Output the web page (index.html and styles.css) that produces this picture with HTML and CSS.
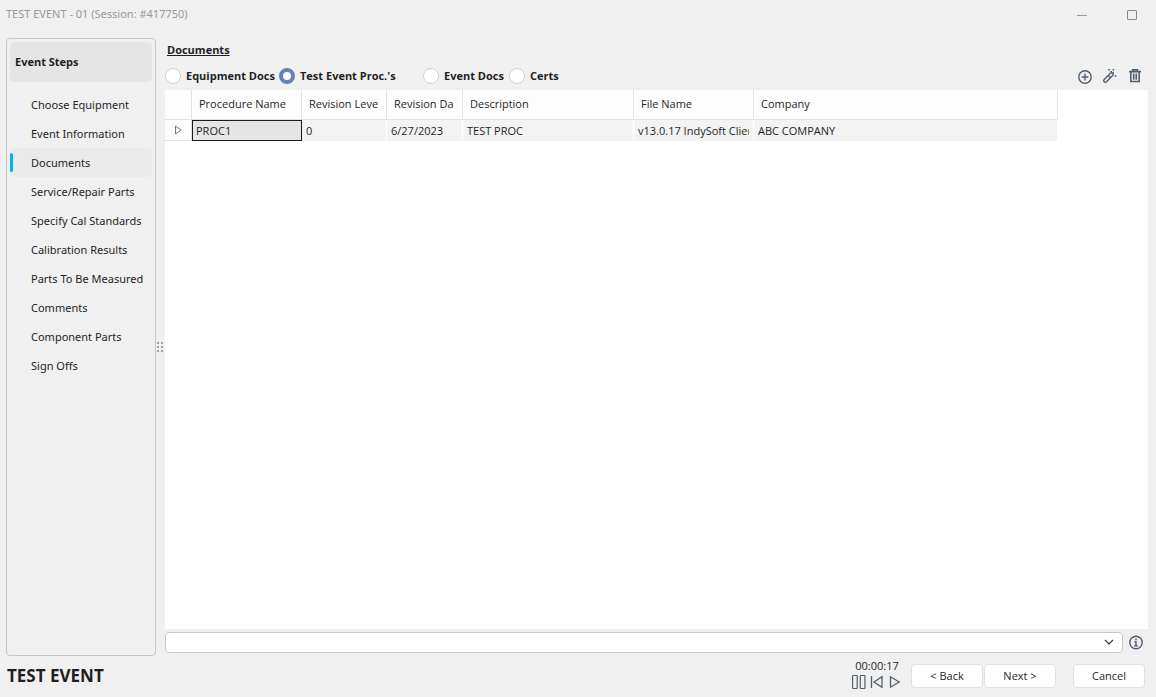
FILE: index.html
```html
<!DOCTYPE html>
<html lang="en">
<head>
<meta charset="utf-8">
<title>TEST EVENT - 01</title>
<link rel="stylesheet" href="styles.css">
</head>
<body>
<div class="window">
  <header class="titlebar">
    <span class="title">TEST EVENT - 01 (Session: #417750)</span>
    <div class="window-controls">
      <button class="icon-button" type="button" aria-label="Minimize"><svg width="12" height="12" viewBox="0 0 12 12"><path d="M1 7.5h10" stroke="#999" fill="none"/></svg></button>
      <button class="icon-button" type="button" aria-label="Maximize"><svg width="12" height="12" viewBox="0 0 12 12"><rect x="1.5" y="2.5" width="9" height="9" rx="0.5" stroke="#8a8a8a" fill="none"/></svg></button>
    </div>
  </header>

  <div class="workspace">
    <nav class="sidebar" aria-label="Event Steps">
      <h2 class="sidebar-title">Event Steps</h2>
      <ul class="steps">
        <li><a class="step" href="#">Choose Equipment</a></li>
        <li><a class="step" href="#">Event Information</a></li>
        <li><a class="step current" href="#" aria-current="step">Documents</a></li>
        <li><a class="step" href="#">Service/Repair Parts</a></li>
        <li><a class="step" href="#">Specify Cal Standards</a></li>
        <li><a class="step" href="#">Calibration Results</a></li>
        <li><a class="step" href="#">Parts To Be Measured</a></li>
        <li><a class="step" href="#">Comments</a></li>
        <li><a class="step" href="#">Component Parts</a></li>
        <li><a class="step" href="#">Sign Offs</a></li>
      </ul>
    </nav>

    <div class="splitter">
      <svg width="7" height="10" viewBox="0 0 7 10" fill="#a6a6a6"><path d="M0 0h2v2H0zM4 0h2v2H4zM0 4h2v2H0zM4 4h2v2H4zM0 8h2v2H0zM4 8h2v2H4z"/></svg>
    </div>

    <main class="content">
      <h1 class="heading">Documents</h1>
      <div class="toolbar">
        <div class="radios">
          <label class="radio equipment"><input type="radio" name="source">Equipment Docs</label>
          <label class="radio procedures"><input type="radio" name="source" checked>Test Event Proc.'s</label>
          <label class="radio event"><input type="radio" name="source">Event Docs</label>
          <label class="radio"><input type="radio" name="source">Certs</label>
        </div>
        <div class="tools">
          <button class="icon-button" type="button" aria-label="Add"><svg width="16" height="16" viewBox="0 0 16 16" fill="none" stroke="#535e72" stroke-width="1.4"><circle cx="8" cy="9" r="6.2"/><path d="M8 5.6v6.8M4.6 9h6.8"/></svg></button>
          <button class="icon-button" type="button" aria-label="Edit"><svg width="16" height="16" viewBox="0 0 16 16" fill="none" stroke="#535e72" stroke-width="1.4"><path d="M2.2 11.4 8.4 5.2q1.2-1 2.3 0t0 2.3L4.5 13.7q-1.2 1-2.3 0t0-2.3zM6.2 7.4l2.3 2.3"/><path d="M6.2 1.8h1.6M10.6 1.8h1.6M8.4 3.8H10M12.6 8h1.8M10.6 4.6h1.2" stroke-width="1.6"/></svg></button>
          <button class="icon-button" type="button" aria-label="Delete"><svg width="16" height="16" viewBox="0 0 16 16" fill="none" stroke="#535e72" stroke-width="1.6"><path d="M2 3.6h12M5.6 3V1.8h4.8V3M3.8 4v9.5h8.4V4M6.7 5.6v6.2M9.3 5.6v6.2"/></svg></button>
        </div>
      </div>

      <div class="grid-panel">
        <table class="grid">
          <colgroup><col class="c-mark"><col class="c-name"><col class="c-level"><col class="c-date"><col class="c-desc"><col class="c-file"><col class="c-company"></colgroup>
          <thead>
            <tr><th></th><th>Procedure Name</th><th>Revision Leve</th><th>Revision Da</th><th>Description</th><th>File Name</th><th>Company</th></tr>
          </thead>
          <tbody>
            <tr>
              <td class="marker"><svg width="10" height="10" viewBox="0 0 10 10"><path d="M2.5 1l5.5 4-5.5 4z" fill="none" stroke="#777"/></svg></td>
              <td class="selected">PROC1</td><td>0</td><td>6/27/2023</td><td>TEST PROC</td><td><div class="clip">v13.0.17 IndySoft Client</div></td><td>ABC COMPANY</td>
            </tr>
          </tbody>
        </table>
      </div>

      <div class="picker-row">
        <div class="picker">
          <select class="select" aria-label="Document"><option></option></select>
          <svg class="chevron" width="10" height="6" viewBox="0 0 10 6"><path d="M1 1l4 4 4-4" fill="none" stroke="#333" stroke-width="1.2"/></svg>
        </div>
        <button class="icon-button" type="button" aria-label="Information"><svg width="16" height="16" viewBox="0 0 16 16" fill="none" stroke="#535e72" stroke-width="1.4"><circle cx="8" cy="7.5" r="6.2"/><path d="M8 3.6v1.6M6.5 6.8H8v4M6.3 10.8h3.4"/></svg></button>
      </div>
    </main>
  </div>

  <footer class="footer">
    <strong class="event-name">TEST EVENT</strong>
    <div class="timer">
      <time>00:00:17</time>
      <div class="media">
        <button class="icon-button" type="button" aria-label="Pause"><svg width="16" height="16" viewBox="0 0 16 16" fill="none" stroke="#535e72" stroke-width="1.2"><rect x="1.6" y="1.5" width="4.6" height="13" rx="0.5"/><rect x="9.3" y="1.5" width="4.6" height="13" rx="0.5"/></svg></button>
        <button class="icon-button" type="button" aria-label="Restart"><svg width="16" height="16" viewBox="0 0 16 16" fill="none" stroke="#535e72" stroke-width="1.3"><path d="M2.5 2v12M13 2.8v10.4L5 8z"/></svg></button>
        <button class="icon-button" type="button" aria-label="Play"><svg width="16" height="16" viewBox="0 0 16 16" fill="none" stroke="#535e72" stroke-width="1.3"><path d="M3.5 2.8v10.4L12.2 8z"/></svg></button>
      </div>
    </div>
    <div class="actions">
      <button class="button" type="button">&lt; Back</button>
      <button class="button" type="button">Next &gt;</button>
      <button class="button cancel" type="button">Cancel</button>
    </div>
  </footer>
</div>
</body>
</html>
```

FILE: styles.css
```css
* { box-sizing: border-box; }

body {
  margin: 0;
  background: #f0f0f0;
  color: #1f1f1f;
  font: 11px/16px "Open Sans", "Noto Sans", sans-serif;
}

button, select { font: inherit; color: inherit; }

.window {
  display: flex;
  flex-direction: column;
  min-height: 100vh;
}

.titlebar {
  display: flex;
  justify-content: space-between;
  align-items: center;
  height: 28px;
  padding: 0 18px 0 6px;
  color: #999;
}
.title { font-family: "Noto Sans", sans-serif; }
.window-controls { display: flex; gap: 38px; }

.icon-button {
  display: flex;
  padding: 0;
  border: 0;
  background: none;
}

.workspace {
  display: flex;
  flex: 1;
  padding: 10px 8px 0 6px;
}

.sidebar {
  width: 150px;
  padding: 3px;
  border: 1px solid #c6c6c6;
  border-radius: 4px;
}
.sidebar-title {
  margin: 0 0 8px;
  padding: 0 5px;
  border-radius: 4px;
  background: #e5e5e5;
  font-size: 11px;
  line-height: 40px;
}
.steps { margin: 0; padding: 0; list-style: none; }
.step {
  display: block;
  padding-left: 21px;
  border-radius: 4px;
  color: inherit;
  font-family: "Noto Sans", sans-serif;
  line-height: 29px;
  text-decoration: none;
  white-space: nowrap;
}
.current {
  position: relative;
  background: #eaeaea;
}
.current::before {
  content: "";
  position: absolute;
  left: 0;
  top: 5px;
  width: 3px;
  height: 19px;
  border-radius: 2px;
  background: #00b7e0;
}

.splitter {
  display: flex;
  align-items: center;
  justify-content: center;
  width: 9px;
}

.content {
  display: flex;
  flex: 1;
  flex-direction: column;
  min-width: 0;
}
.heading {
  margin: 4px 2px 6px;
  font-size: 11px;
  line-height: 16px;
  text-decoration: underline;
}
.toolbar {
  display: flex;
  justify-content: space-between;
  align-items: center;
  height: 24px;
  margin-bottom: 2px;
  padding-right: 5px;
}
.radios { display: flex; height: 20px; }
.radio {
  display: flex;
  gap: 5px;
  align-items: center;
  font-weight: bold;
  white-space: nowrap;
}
.radio input {
  appearance: none;
  width: 16px;
  height: 16px;
  margin: 0;
  border: 1px solid #d2d2d2;
  border-radius: 50%;
  background: #fff;
}
.radio input:checked { border: 4px solid #6682b3; }
.equipment { width: 114px; }
.procedures { width: 144px; }
.event { width: 86px; }
.tools { display: flex; gap: 9px; }

.grid-panel {
  flex: 1;
  background: #fff;
}
.grid {
  width: 893px;
  border-collapse: separate;
  border-spacing: 0;
  table-layout: fixed;
}
.c-mark { width: 27px; }
.c-name { width: 110px; }
.c-level { width: 85px; }
.c-date { width: 76px; }
.c-desc { width: 171px; }
.c-file { width: 120px; }
.c-company { width: 304px; }
.grid th, .grid td {
  overflow: hidden;
  text-align: left;
  white-space: nowrap;
}
.grid th {
  height: 30px;
  padding: 0 7px 2px;
  border-right: 1px solid #e3e3e3;
  border-bottom: 1px solid #e3e3e3;
  background: #fdfdfd;
  font-weight: normal;
}
.grid td {
  height: 21px;
  padding: 0 4px;
  border-right: 1px solid #fff;
  background: #f3f3f3;
}
.grid .marker {
  padding: 0 8px;
  border-right: 1px solid #e3e3e3;
  border-bottom: 1px solid #e3e3e3;
  background: #fdfdfd;
}
.marker svg { display: block; }
.grid .selected {
  padding: 0 3px;
  background: #e5e5e5;
  border: 1px solid #1c1c1c;
}
.clip { overflow: hidden; }

.picker-row {
  display: flex;
  align-items: center;
  gap: 5px;
  padding: 3px 4px 3px 0;
}
.picker {
  position: relative;
  flex: 1;
}
.select {
  display: block;
  appearance: none;
  width: 100%;
  height: 21px;
  border: 1px solid #c9c9c9;
  border-radius: 4px;
  background: #fff;
}
.chevron {
  position: absolute;
  top: 7px;
  right: 9px;
  pointer-events: none;
}

.footer {
  display: flex;
  align-items: center;
  height: 41px;
  padding: 0 11px 2px 7px;
}
.event-name {
  margin-right: auto;
  font-size: 17px;
}
.timer {
  display: flex;
  flex-direction: column;
  align-items: center;
  margin-right: 8px;
  padding-bottom: 3px;
}
.media { display: flex; gap: 2px; }
.actions { display: flex; gap: 1px; }
.button {
  width: 72px;
  height: 24px;
  padding: 0;
  border: 1px solid #e0e0e0;
  border-radius: 4px;
  background: #fff;
}
.cancel { margin-left: 16px; }
```
